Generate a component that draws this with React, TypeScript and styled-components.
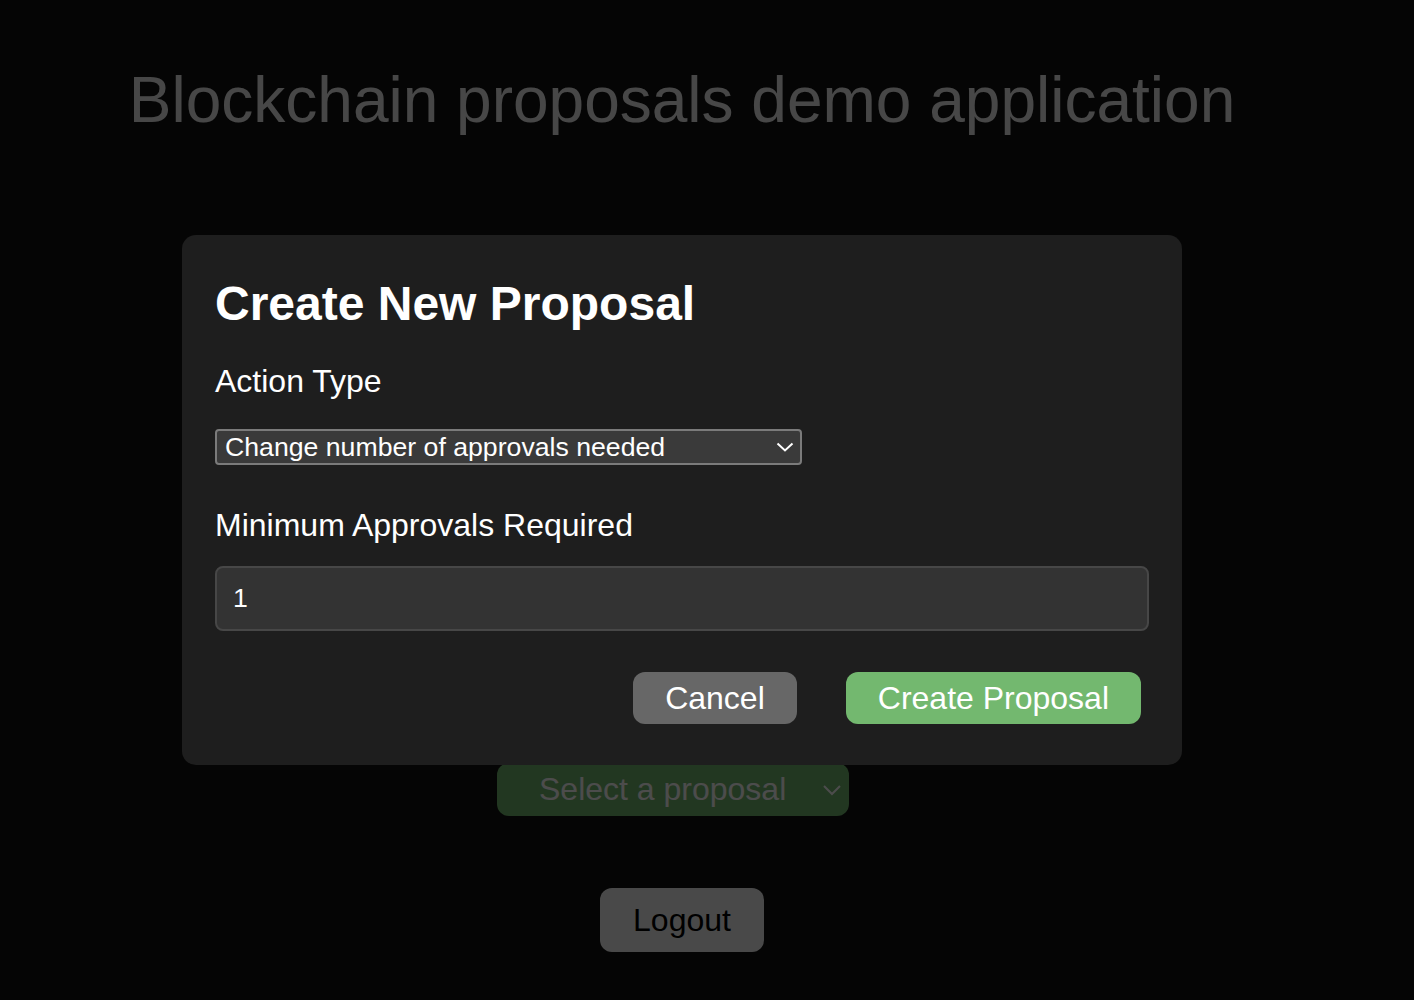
import React from "react";
import styled, { createGlobalStyle } from "styled-components";

const GlobalStyle = createGlobalStyle`
  html, body {
    margin: 0;
    padding: 0;
    background: #121212;
    font-family: "Liberation Sans", Arial, Helvetica, sans-serif;
    color: #eeeeee;
  }
  * { box-sizing: border-box; }
`;

const Page = styled.div`
  width: 1364px;
  min-height: 1000px;
  display: flex;
  flex-direction: column;
  align-items: center;
  padding-top: 63px;
`;

const Heading = styled.h1`
  margin: 0;
  font-size: 64px;
  font-weight: 400;
  color: #eeeeee;
  line-height: normal;
`;

const ProposalSelectWrap = styled.div`
  position: relative;
  margin-top: 626px;
  margin-left: -18px;
`;

const ProposalSelect = styled.div`
  width: 352px;
  height: 53px;
  border-radius: 12px;
  background: #73b86f;
  color: #ffffff;
  font-size: 32px;
  display: flex;
  align-items: center;
  padding-left: 42px;
`;

const Chevron = styled.svg<{ $right: number }>`
  position: absolute;
  top: 50%;
  right: ${(p) => p.$right}px;
  transform: translateY(-50%);
`;

const LogoutButton = styled.button`
  margin-top: 72px;
  height: 64px;
  padding: 0 33px;
  border: none;
  border-radius: 12px;
  background: #f5f5f5;
  color: #000000;
  font-family: inherit;
  font-size: 32px;
`;

const Overlay = styled.div`
  position: fixed;
  inset: 0;
  padding-right: 50px;
  background: rgba(0, 0, 0, 0.7);
  display: flex;
  align-items: center;
  justify-content: center;
`;

const Modal = styled.div`
  width: 1000px;
  background: #1e1e1e;
  border-radius: 14px;
  padding: 41px 33px 41px 33px;
  display: flex;
  flex-direction: column;
  color: #ffffff;
`;

const ModalTitle = styled.h2`
  margin: 0;
  font-size: 48px;
  font-weight: 700;
  line-height: 55px;
`;

const Label = styled.label<{ $top: number }>`
  display: block;
  margin-top: ${(p) => p.$top}px;
  font-size: 32px;
  line-height: 37px;
`;

const ActionSelectWrap = styled.div`
  position: relative;
  width: 587px;
  margin-top: 29px;
`;

const ActionSelect = styled.div`
  height: 36px;
  border: 2px solid #7b7b7b;
  border-radius: 4px;
  background: #3a3a3a;
  color: #ffffff;
  font-size: 26.67px;
  display: flex;
  align-items: center;
  padding-left: 8px;
`;

const NumberInput = styled.input`
  margin-top: 22px;
  width: 100%;
  height: 65px;
  padding: 0 16px;
  border: 2px solid #474747;
  border-radius: 8px;
  background: #333333;
  color: #ffffff;
  font-family: inherit;
  font-size: 26.67px;
  outline: none;
`;

const Actions = styled.div`
  margin-top: 41px;
  display: flex;
  justify-content: flex-end;
  gap: 49px;
  padding-right: 8px;
`;

const ActionButton = styled.button<{ $primary?: boolean }>`
  height: 52px;
  padding: 0 32px;
  border: none;
  border-radius: 12px;
  background: ${(p) => (p.$primary ? "#73b86f" : "#676767")};
  color: #ffffff;
  font-family: inherit;
  font-size: 32px;
`;

export default function App() {
  return (
    <>
      <GlobalStyle />
      <Page>
        <Heading>Blockchain proposals demo application</Heading>
        <ProposalSelectWrap>
          <ProposalSelect>Select a proposal</ProposalSelect>
          <Chevron $right={8} width="18" height="12" viewBox="0 0 18 12">
            <path d="M1 2 L9 10 L17 2" fill="none" stroke="#ffffff" strokeWidth="2" />
          </Chevron>
        </ProposalSelectWrap>
        <LogoutButton>Logout</LogoutButton>
      </Page>
      <Overlay>
        <Modal>
          <ModalTitle>Create New Proposal</ModalTitle>
          <Label $top={32}>Action Type</Label>
          <ActionSelectWrap>
            <ActionSelect>Change number of approvals needed</ActionSelect>
            <Chevron $right={8} width="18" height="12" viewBox="0 0 18 12">
              <path d="M1.5 2.5 L9 9.5 L16.5 2.5" fill="none" stroke="#ffffff" strokeWidth="2" />
            </Chevron>
          </ActionSelectWrap>
          <Label $top={42}>Minimum Approvals Required</Label>
          <NumberInput type="number" defaultValue={1} readOnly />
          <Actions>
            <ActionButton>Cancel</ActionButton>
            <ActionButton $primary>Create Proposal</ActionButton>
          </Actions>
        </Modal>
      </Overlay>
    </>
  );
}
